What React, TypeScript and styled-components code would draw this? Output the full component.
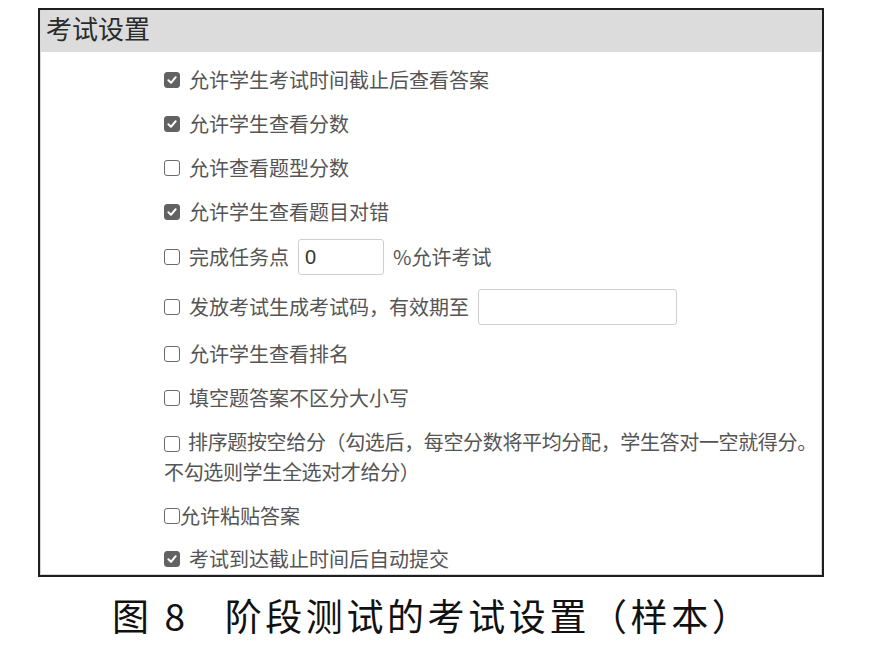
import * as React from 'react'
import styled, { createGlobalStyle } from 'styled-components'

const GlobalStyle = createGlobalStyle`
    body {
        margin: 0;
        background: #ffffff;
        font-family: 'Noto Sans CJK SC', 'Noto Sans', sans-serif;
    }
`

const Page = styled.div`
    width: 896px;
    height: 664px;
    padding: 8px 0 0 38px;
    box-sizing: border-box;
`

const Panel = styled.section`
    width: 786px;
    height: 569px;
    box-sizing: border-box;
    border: 2px solid #1e1e1e;
    overflow: hidden;
`

const PanelInner = styled.div`
    height: 100%;
    box-sizing: border-box;
    border: 1px solid #d8d8d8;
    border-top: none;
`

const PanelHeader = styled.h2`
    margin: 0;
    height: 42px;
    padding-left: 5px;
    background: #dcdcdc;
    color: #2a2a2a;
    font-size: 26px;
    font-weight: 400;
    line-height: 36px;
`

const OptionList = styled.div`
    display: flex;
    flex-direction: column;
    gap: 14px;
    padding: 13px 0 0 123px;
`

const Option = styled.label<{ $tight?: boolean; $pull?: number }>`
    display: flex;
    align-items: center;
    gap: ${p => (p.$tight ? '0' : '9px')};
    min-height: 30px;
    margin-top: ${p => (p.$pull ? -p.$pull : 0)}px;
    color: #555;
    font-size: 20px;
    line-height: 30px;
    white-space: nowrap;
`

const WrapOption = styled.label`
    display: block;
    color: #555;
    font-size: 20px;
    line-height: 30px;
    letter-spacing: -0.35px;
    white-space: nowrap;
`

const Box = styled.span<{ $checked?: boolean }>`
    display: inline-flex;
    align-items: center;
    justify-content: center;
    flex: none;
    width: 16px;
    height: 16px;
    box-sizing: border-box;
    border-radius: 3px;
    border: 1.5px solid ${p => (p.$checked ? '#626262' : '#6a6a6a')};
    background: ${p => (p.$checked ? '#626262' : '#ffffff')};
    vertical-align: -2px;
`

const InlineBox = styled(Box)`
    margin-right: 8px;
`

const TextInput = styled.input<{ $w: number }>`
    width: ${p => p.$w}px;
    height: 36px;
    box-sizing: border-box;
    border: 1px solid #cfcfcf;
    border-radius: 3px;
    padding: 0 6px;
    font-family: 'Liberation Sans', 'Noto Sans CJK SC', sans-serif;
    font-size: 20px;
    color: #333;
    outline: none;
`

const Caption = styled.p`
    margin: 16px 0 0 0;
    padding-left: 74px;
    color: #111;
    font-size: 37px;
    font-weight: 400;
    line-height: 44px;
    letter-spacing: 3.6px;
`

const FigNo = styled.span`
    margin-right: 36px;
`

const Check: React.FC<{ checked?: boolean }> = ({ checked }) => (
    <Box $checked={checked}>
        {checked && (
            <svg width="12" height="12" viewBox="0 0 12 12">
                <path d="M2.4 6.3 L5 8.8 L9.7 3.2" fill="none" stroke="#fff" strokeWidth="2" strokeLinecap="round" strokeLinejoin="round" />
            </svg>
        )}
    </Box>
)

const items: { text: string; checked?: boolean }[] = [
    { text: '允许学生考试时间截止后查看答案', checked: true },
    { text: '允许学生查看分数', checked: true },
    { text: '允许查看题型分数' },
    { text: '允许学生查看题目对错', checked: true },
]

export default function App() {
    return (
        <Page>
            <GlobalStyle />
            <Panel>
                <PanelInner>
                    <PanelHeader>考试设置</PanelHeader>
                    <OptionList>
                        {items.map(it => (
                            <Option key={it.text}>
                                <Check checked={it.checked} />
                                {it.text}
                            </Option>
                        ))}
                        <Option $pull={2}>
                            <Check />
                            完成任务点
                            <TextInput $w={86} defaultValue="0" />
                            %允许考试
                        </Option>
                        <Option>
                            <Check />
                            发放考试生成考试码，有效期至
                            <TextInput $w={199} />
                        </Option>
                        <Option>
                            <Check />
                            允许学生查看排名
                        </Option>
                        <Option>
                            <Check />
                            填空题答案不区分大小写
                        </Option>
                        <WrapOption>
                            <InlineBox />
                            排序题按空给分（勾选后，每空分数将平均分配，学生答对一空就得分。
                            <br />
                            不勾选则学生全选对才给分）
                        </WrapOption>
                        <Option $tight>
                            <Check />
                            允许粘贴答案
                        </Option>
                        <Option $pull={1}>
                            <Check checked />
                            考试到达截止时间后自动提交
                        </Option>
                    </OptionList>
                </PanelInner>
            </Panel>
            <Caption>
                <FigNo>图 8</FigNo>阶段测试的考试设置（样本）
            </Caption>
        </Page>
    )
}
